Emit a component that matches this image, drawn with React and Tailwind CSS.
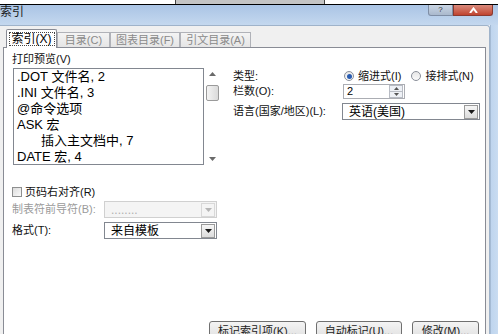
import React from "react";

const font = "font-['Liberation_Sans','Noto_Sans_CJK_SC',sans-serif]";

function DropArrow({ disabled }) {
    return (
        <div
            className={`w-[14px] h-[14px] mr-px flex items-center justify-center border ${
                disabled ? "border-[#d8d8d8] bg-[#f4f4f4]" : "border-[#9a9a9a] bg-gradient-to-b from-[#f6f6f6] to-[#dcdcdc]"
            }`}
        >
            <svg width="7" height="4" viewBox="0 0 7 4">
                <path d="M0 0h7L3.5 4z" fill={disabled ? "#b5b5b5" : "#1a1a1a"} />
            </svg>
        </div>
    );
}

function Select({ value, width, disabled }) {
    return (
        <div
            className={`h-[17px] flex items-center justify-between border ${
                disabled ? "border-[#d0d0d0] bg-[#f4f4f4] text-[#b0b0b0]" : "border-[#828790] bg-white text-black"
            }`}
            style={{ width }}
        >
            <span className="pl-[6px] text-[12px] leading-none">{value}</span>
            <DropArrow disabled={disabled} />
        </div>
    );
}

function Tab({ label, selected, width }) {
    if (selected) {
        return (
            <div
                className="relative z-10 h-[19px] flex items-center justify-center bg-white border-x border-t border-[#898c95] rounded-t-[2px]"
                style={{ width }}
            >
                <span className="px-[2px] border border-dotted border-[#444] leading-[12px] text-[12px] text-black">{label}</span>
            </div>
        );
    }
    return (
        <div
            className="h-[16px] flex items-center justify-center bg-gradient-to-b from-[#f4f4f4] to-[#e4e4e4] border-x border-t border-[#b0b2b8] text-[11px] text-[#8a8a8a]"
            style={{ width }}
        >
            {label}
        </div>
    );
}

function Radio({ checked, label }) {
    return (
        <div className="flex items-center gap-[4px]">
            <div className="w-[10px] h-[10px] rounded-full border border-[#8a8f99] bg-gradient-to-b from-[#e6e6e6] to-[#fafafa] flex items-center justify-center">
                {checked && <div className="w-[5px] h-[5px] rounded-full bg-[#2a5cb0]" />}
            </div>
            <span className="text-[11px] text-[#111]">{label}</span>
        </div>
    );
}

function Button({ label, width }) {
    return (
        <div
            className="h-[22px] flex items-start pt-[3px] justify-center rounded-[3px] border border-[#707070] bg-gradient-to-b from-[#f4f4f4] to-[#dcdcdc] text-[11px] leading-[13px] text-[#222]"
            style={{ width }}
        >
            {label}
        </div>
    );
}

const previewLines = [
    { text: ".DOT 文件名, 2" },
    { text: ".INI 文件名, 3" },
    { text: "@命令选项" },
    { text: "ASK 宏" },
    { text: "插入主文档中, 7", indent: true },
    { text: "DATE 宏, 4" },
];

export default function App() {
    return (
        <div className={`w-[498px] h-[334px] overflow-hidden flex flex-col bg-white ${font}`}>
            {/* strip above the window */}
            <div className="h-[5px] shrink-0 flex bg-white border-b border-black">
                <div className="ml-[175px] w-[150px] h-full bg-[#c4c4c4] border-x border-[#444]" />
            </div>

            {/* title bar */}
            <div className="h-[20px] shrink-0 flex bg-gradient-to-b from-[#aac4e5] to-[#c4d8ef]">
                <div className="pt-[1px] text-[12px] leading-[13px] text-[#1b1b1b]">索引</div>
                <div className="flex-1" />
                <div className="flex items-start mr-[5px]">
                    <div className="w-[25px] h-[11px] rounded-bl-[3px] border border-t-0 border-[#7f8ea5] bg-gradient-to-b from-[#c9d5e4] to-[#aab9cd] flex items-center justify-center text-[8px] leading-none text-[#333]">
                        ?
                    </div>
                    <div className="w-[40px] h-[11px] rounded-br-[3px] border border-t-0 border-[#8c3a30] bg-gradient-to-b from-[#d98a7c] to-[#c0432f] flex items-center justify-center">
                        <svg width="9" height="6" viewBox="0 0 9 6">
                            <path d="M1 6L4.5 1.5L8 6" stroke="#fff" strokeWidth="2" fill="none" />
                        </svg>
                    </div>
                </div>
            </div>

            <div className="flex flex-1 min-h-0">
                {/* dialog body */}
                <div className="w-[490px] flex flex-col bg-[#f0f0f0] border-t border-r border-[#9fb3ca] rounded-tr-[3px] pt-[3px]">
                    <div className="flex items-end pl-[6px] h-[19px]">
                        <Tab label="索引(X)" selected width={51} />
                        <Tab label="目录(C)" width={53} />
                        <Tab label="图表目录(F)" width={70} />
                        <Tab label="引文目录(A)" width={71} />
                    </div>

                    <div className="-mt-px ml-[3px] w-[483px] flex-1 bg-white border border-[#898c95] flex flex-col">
                        <div className="h-[273px] flex">
                            {/* left column */}
                            <div className="w-[229px] pl-[8px] pt-[4px] flex flex-col">
                                <div className="h-[14px] text-[11px] leading-[14px] text-[#111]">打印预览(V)</div>
                                <div className="mt-[2px] ml-px flex">
                                    <div className="w-[191px] h-[97px] overflow-hidden border border-[#828790] pl-[3px] flex flex-col">
                                        {previewLines.map((l, i) => (
                                            <div
                                                key={i}
                                                className={`h-[16px] shrink-0 text-[13px] leading-[16px] text-black whitespace-pre ${
                                                    l.indent ? "pl-[24px]" : ""
                                                }`}
                                            >
                                                {l.text}
                                            </div>
                                        ))}
                                    </div>
                                    <div className="w-[16px] h-[97px] flex flex-col items-center bg-white">
                                        <svg className="mt-[4px]" width="7" height="4" viewBox="0 0 7 4">
                                            <path d="M0 4h7L3.5 0z" fill="#6a6a6a" />
                                        </svg>
                                        <div className="mt-[9px] w-[13px] h-[16px] rounded-[2px] border border-[#9a9a9a] bg-gradient-to-r from-[#f4f4f4] to-[#dadada]" />
                                        <div className="flex-1" />
                                        <svg className="mb-[4px]" width="7" height="4" viewBox="0 0 7 4">
                                            <path d="M0 0h7L3.5 4z" fill="#6a6a6a" />
                                        </svg>
                                    </div>
                                </div>

                                <div className="mt-[20px] h-[14px] flex items-center gap-[3px]">
                                    <div className="w-[10px] h-[10px] border border-[#8e8f8f] bg-gradient-to-br from-[#dcdcdc] to-[#fbfbfb]" />
                                    <span className="text-[11px] text-[#111]">页码右对齐(R)</span>
                                </div>

                                <div className="mt-[2px] flex items-center">
                                    <span className="w-[92px] text-[11px] text-[#9a9a9a]">制表符前导符(B):</span>
                                    <Select value="........" width={113} disabled />
                                </div>

                                <div className="mt-[4px] flex items-center">
                                    <span className="w-[92px] text-[11px] text-[#111]">格式(T):</span>
                                    <Select value="来自模板" width={113} />
                                </div>
                            </div>

                            {/* right column */}
                            <div className="pt-[20px] flex flex-col">
                                <div className="h-[16px] flex items-center">
                                    <span className="w-[111px] text-[11px] text-[#111]">类型:</span>
                                    <div className="flex items-center gap-[10px]">
                                        <Radio checked label="缩进式(I)" />
                                        <Radio label="接排式(N)" />
                                    </div>
                                </div>

                                <div className="h-[15px] flex items-center">
                                    <span className="w-[110px] text-[11px] text-[#111]">栏数(O):</span>
                                    <div className="w-[62px] h-[15px] flex items-center justify-between border border-[#abadb3] bg-white">
                                        <span className="pl-[3px] text-[11px] leading-none">2</span>
                                        <div className="w-[14px] h-[13px] mr-px flex flex-col border border-[#b8bcc4] bg-[#eef1f6]">
                                            <div className="flex-1 flex items-center justify-center border-b border-[#b8bcc4]">
                                                <svg width="5" height="3" viewBox="0 0 5 3">
                                                    <path d="M0 3h5L2.5 0z" fill="#555" />
                                                </svg>
                                            </div>
                                            <div className="flex-1 flex items-center justify-center">
                                                <svg width="5" height="3" viewBox="0 0 5 3">
                                                    <path d="M0 0h5L2.5 3z" fill="#555" />
                                                </svg>
                                            </div>
                                        </div>
                                    </div>
                                </div>

                                <div className="mt-[4px] flex items-center">
                                    <span className="w-[109px] text-[11px] text-[#111]">语言(国家/地区)(L):</span>
                                    <Select value="英语(美国)" width={138} />
                                </div>
                            </div>
                        </div>

                        <div className="flex justify-end pr-[6px] gap-[10px]">
                            <Button label="标记索引项(K)..." width={97} />
                            <Button label="自动标记(U)..." width={86} />
                            <Button label="修改(M)..." width={67} />
                        </div>
                    </div>
                </div>

                {/* window frame */}
                <div className="flex-1 bg-gradient-to-r from-[#bfd5ee] to-[#c9dcf1] border-l border-[#a5bbd4]" />
            </div>
        </div>
    );
}
